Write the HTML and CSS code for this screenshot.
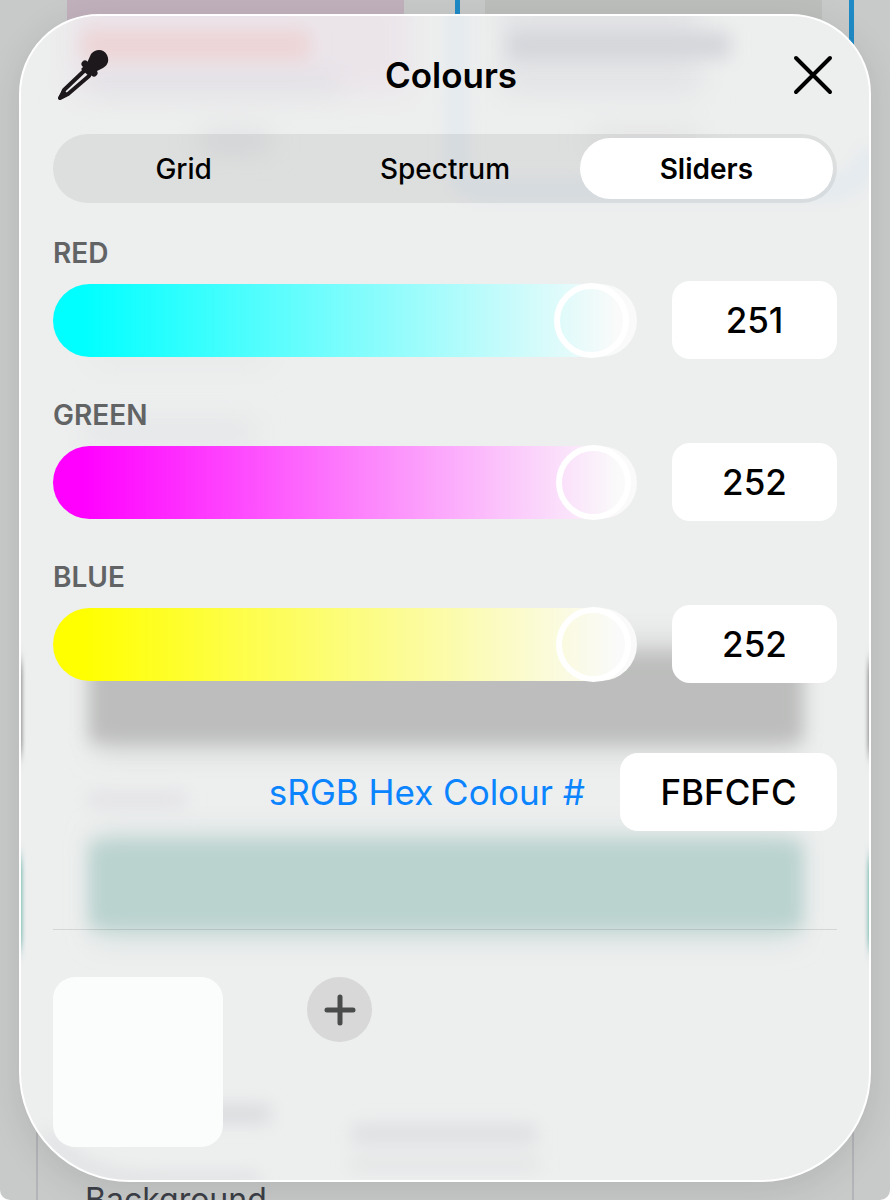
FILE: index.html
```html
<!DOCTYPE html>
<html lang="en-GB">
<head>
    <meta charset="UTF-8">
    <meta name="viewport" content="width=device-width, initial-scale=1.0">
    <title>Colours</title>
    <link rel="stylesheet" href="styles.css">
</head>
<body>
    <div class="stage">
        <!-- Page under the picker -->
        <div class="page">
            <div class="themes">
                <div class="theme"><div class="theme-preview pink"></div></div>
                <div class="theme selected"><div class="theme-preview"></div></div>
            </div>
            <div class="settings"><span>Background</span></div>
        </div>

        <main class="picker">
            <!-- Page colours showing through the glass -->
            <svg class="glass" viewBox="21 16 848 1164" preserveAspectRatio="none" aria-hidden="true">
                <defs>
                    <filter id="edge" x="-200%" y="-20%" width="500%" height="140%"><feGaussianBlur stdDeviation="2 8"/></filter>
                    <filter id="soft" x="-20%" y="-60%" width="140%" height="220%"><feGaussianBlur stdDeviation="9"/></filter>
                    <filter id="softer" x="-30%" y="-100%" width="160%" height="300%"><feGaussianBlur stdDeviation="14"/></filter>
                </defs>
                <g filter="url(#softer)">
                    <rect x="70" y="-10" width="340" height="104" fill="#ebe5ea"/>
                    <rect x="90" y="72" width="250" height="24" fill="#e2e0e5"/>
                    <rect x="500" y="-10" width="200" height="104" fill="#e3e4e6"/>
                    <rect x="200" y="132" width="70" height="16" fill="#dcdee0"/>
                    <rect x="590" y="132" width="110" height="16" fill="#e0e0e2"/>
                    <rect x="90" y="352" width="180" height="10" fill="#e2e5e6"/>
                    <rect x="85" y="422" width="170" height="20" fill="#e3e4e6"/>
                    <rect x="96" y="640" width="700" height="112" fill="#d4d5d5"/>
                    <rect x="96" y="834" width="700" height="104" fill="#cfdedc"/>
                </g>
                <g filter="url(#soft)">
                    <rect x="82" y="30" width="228" height="30" fill="#edd4d6"/>
                    <rect x="508" y="32" width="222" height="26" fill="#d4d5da"/>
                    <path d="M457 0V160Q457 190 490 190H820Q862 190 872 150" fill="none" stroke="#e1e9ef" stroke-width="16"/>
                    <rect x="90" y="654" width="712" height="88" fill="#bcbdbc"/>
                    <rect x="90" y="842" width="712" height="86" fill="#bad3cf"/>
                    <rect x="88" y="792" width="98" height="16" fill="#e2e2e5"/>
                    <rect x="190" y="1106" width="80" height="16" fill="#d7d8db"/>
                    <rect x="352" y="1125" width="184" height="18" fill="#dddee1"/>
                    <rect x="350" y="1160" width="190" height="8" fill="#dddee0"/>
                    <path d="M46 1132Q75 1178 150 1180H260" fill="none" stroke="#d6d8db" stroke-width="8"/>
                </g>
                <g filter="url(#edge)">
                    <rect x="16" y="662" width="6" height="92" fill="#868686"/>
                    <rect x="16" y="858" width="6" height="90" fill="#72b8ad"/>
                    <rect x="868" y="662" width="6" height="92" fill="#868686"/>
                    <rect x="868" y="858" width="6" height="90" fill="#72b8ad"/>
                </g>
            </svg>

            <header class="picker-header">
                <button class="icon-btn" type="button" aria-label="Pick from screen">
                    <svg width="56" height="56" viewBox="0 0 56 56">
                        <path d="M31 24 11 43Q10 46 7 51Q11 49 15 47L36 29" fill="none" stroke="#1c181b" stroke-width="4" stroke-linecap="round" stroke-linejoin="round"/>
                        <path d="M5 51 10 42 16 48 8 52.500Q5 53 5 51Z" fill="#1c181b"/>
                        <path d="M32 17 41 26" stroke="#1c181b" stroke-width="7" stroke-linecap="round"/>
                        <path d="M34 16 38 7C43 1 51 2 54 8C57 14 54 19 50 21L42 25L37 30 28 22Z" fill="#1c181b"/>
                    </svg>
                </button>
                <h1>Colours</h1>
                <button class="icon-btn" type="button" aria-label="Close">
                    <svg width="40" height="40" viewBox="0 0 40 40">
                        <path d="M3 3 37 37M37 3 3 37" fill="none" stroke="#000" stroke-width="4" stroke-linecap="round"/>
                    </svg>
                </button>
            </header>

            <nav class="tabs">
                <button class="tab" type="button">Grid</button>
                <button class="tab" type="button">Spectrum</button>
                <button class="tab active" type="button">Sliders</button>
            </nav>

            <div class="channels">
                <div class="channel">
                    <label for="red">RED</label>
                    <div class="channel-row">
                        <input class="slider red" id="red" type="range" min="0" max="255" value="251">
                        <input class="value" type="text" value="251" aria-label="Red value">
                    </div>
                </div>
                <div class="channel">
                    <label for="green">GREEN</label>
                    <div class="channel-row">
                        <input class="slider green" id="green" type="range" min="0" max="255" value="252">
                        <input class="value" type="text" value="252" aria-label="Green value">
                    </div>
                </div>
                <div class="channel">
                    <label for="blue">BLUE</label>
                    <div class="channel-row">
                        <input class="slider blue" id="blue" type="range" min="0" max="255" value="252">
                        <input class="value" type="text" value="252" aria-label="Blue value">
                    </div>
                </div>
            </div>

            <div class="hex-row">
                <label for="hex">sRGB Hex Colour #</label>
                <input class="value hex" id="hex" type="text" value="FBFCFC">
            </div>

            <div class="swatches">
                <div class="swatch"></div>
                <button class="add-btn" type="button" aria-label="Add colour">
                    <svg width="32" height="32" viewBox="0 0 32 32">
                        <path d="M16 3V29M3 16H29" fill="none" stroke="#4a4b4b" stroke-width="5" stroke-linecap="round"/>
                    </svg>
                </button>
            </div>
        </main>
    </div>
</body>
</html>
```
FILE: styles.css
```css
* { margin: 0; padding: 0; box-sizing: border-box; }
body { font-family: Inter, "Liberation Sans", sans-serif; background: #fff; color: #000; }
button, input { font: inherit; color: inherit; border: none; background: none; }
button { cursor: pointer; }
svg { display: block; }

.stage { position: relative; padding: 14px 19px 18px; overflow: hidden; background: #c8cac9; border-radius: 0 0 10px 10px; }

/* page underneath */
.page { position: absolute; inset: 0 0 -20px; padding: 0 36px; display: flex; flex-direction: column; }
.themes { display: grid; grid-template-columns: 1fr 1fr; gap: 20px; height: 190px; }
.theme { padding: 0 31px; }
.theme.selected { padding: 0 27px 0 25px; border: 5px solid #1f8ac5; border-top: none; }
.theme-preview { height: 90px; background: #bdbfbd; }
.theme-preview.pink { background: #c1b1bd; }
.settings { flex: 1; display: flex; align-items: flex-end; padding: 0 47px; border: 2px solid #b3b3b8; border-width: 0 2px; font-size: 32px; line-height: 40px; color: #3c3f47; }

/* picker */
.picker { position: relative; z-index: 0; overflow: hidden; padding: 0 32px 33px; background: #edeeee; border: 2px solid #fff; border-radius: 80px 80px 110px 110px; box-shadow: 0 8px 36px rgba(0,0,0,0.1); }
.glass { position: absolute; inset: 0; z-index: -1; width: 100%; height: 100%; }
.picker-header { display: flex; justify-content: space-between; align-items: center; height: 118px; padding: 0 4px 0 0; }
.picker-header h1 { font-size: 35px; line-height: 44px; font-weight: 600; }
.icon-btn { display: flex; }

.tabs { display: grid; grid-template-columns: 1fr 1fr 1fr; height: 69px; background: rgba(0,0,0,0.065); border-radius: 35px; }
.tab { margin: 4px; border-radius: 31px; font-size: 28px; line-height: 36px; font-weight: 500; }
.tab.active { background: #fff; font-weight: 600; }

.channels { display: flex; flex-direction: column; gap: 38px; margin-top: 32px; }
.channel label { display: block; margin-bottom: 10px; font-size: 28px; line-height: 36px; font-weight: 600; color: #616364; }
.channel-row { display: flex; align-items: center; gap: 35px; }
.value { width: 165px; height: 78px; flex: none; border-radius: 18px; background: #fff; text-align: center; font-size: 35px; line-height: 44px; font-weight: 500; }
.slider { -webkit-appearance: none; appearance: none; flex: 1; min-width: 0; height: 73px; border-radius: 37px; }
.slider.red { background: linear-gradient(90deg, #0ff 30px, #fafafa calc(100% - 20px)); }
.slider.green { background: linear-gradient(90deg, #f0f 30px, #fafafa calc(100% - 20px)); }
.slider.blue { background: linear-gradient(90deg, #ff0 30px, #fafafa calc(100% - 20px)); }
.slider::-webkit-slider-thumb { -webkit-appearance: none; width: 75px; height: 75px; border: 6px solid #fff; border-radius: 50%; background: transparent; }

.hex-row { display: flex; justify-content: flex-end; align-items: center; gap: 35px; margin-top: 70px; padding-bottom: 98px; border-bottom: 1px solid rgba(0,0,0,0.1); }
.hex-row label { font-size: 35px; line-height: 44px; color: #0a84ff; }
.value.hex { width: 217px; }

.swatches { display: flex; align-items: flex-start; gap: 84px; padding-top: 47px; }
.swatch { width: 170px; height: 170px; border-radius: 22px; background: #fbfdfc; }
.add-btn { display: flex; justify-content: center; align-items: center; width: 65px; height: 65px; border-radius: 50%; background: #d8d8d8; }
```
